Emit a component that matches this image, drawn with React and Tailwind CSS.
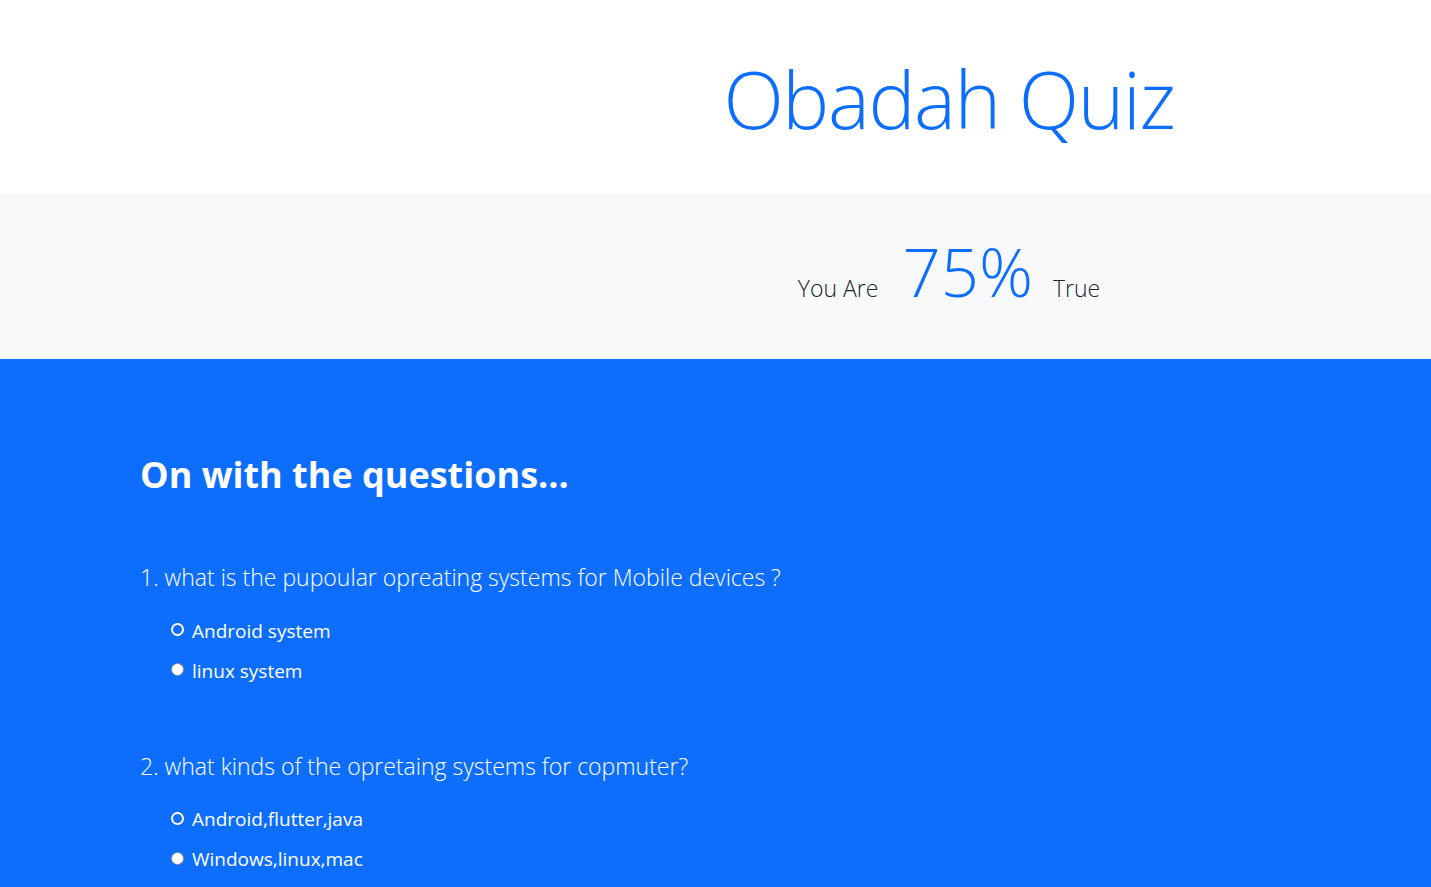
export default function App() {
  const questions = [
    {
      q: "1. what is the pupoular opreating systems for Mobile devices ?",
      options: ["Android system", "linux system"],
    },
    {
      q: "2. what kinds of the opretaing systems for copmuter?",
      options: ["Android,flutter,java", "Windows,linux,mac"],
    },
  ];

  return (
    <div className="min-h-[887px] bg-[#0d6efd] font-['Open_Sans',sans-serif]">
      {/* Title */}
      <header className="h-[194px] bg-white flex justify-center pl-[467px] pt-[52px]">
        <h1 className="text-[79px] leading-[1.2] font-light text-[#0d6efd] tracking-[-1.4px]">
          Obadah Quiz
        </h1>
      </header>

      {/* Score */}
      <section className="h-[165px] bg-[#f8f9fa] flex justify-center items-start pl-[467px] pt-[44px]">
        <div className="flex items-baseline">
          <span className="text-[23px] font-light text-[#212529]">You Are</span>
          <span className="text-[67px] font-light text-[#0d6efd] ml-[24px] mr-[20px] leading-none">75%</span>
          <span className="text-[23px] font-light text-[#212529]">True</span>
        </div>
      </section>

      {/* Questions */}
      <main className="px-[140px] pt-[94px] pb-10 text-white">
        <h2 className="text-[36px] font-bold leading-[1.2]">On with the questions...</h2>

        {questions.map((item, i) => (
          <div key={i} className={i === 0 ? "mt-[64px]" : "mt-[64px]"}>
            <p className="text-[23px] font-light leading-[1.5]">{item.q}</p>
            <ul className="mt-[22px] pl-[31px] flex flex-col gap-[12px]">
              {item.options.map((opt, j) => (
                <li key={j} className="flex items-center gap-[8px] text-[19px] leading-[28px]">
                  {j === 0 ? (
                    <span className="w-[13px] h-[13px] rounded-full border-2 border-white bg-[#0d6efd] -mt-[2px]" />
                  ) : (
                    <span className="w-[13px] h-[13px] rounded-full border border-[#8a8a8a] bg-white -mt-[2px]" />
                  )}
                  <span>{opt}</span>
                </li>
              ))}
            </ul>
          </div>
        ))}
      </main>
    </div>
  );
}
